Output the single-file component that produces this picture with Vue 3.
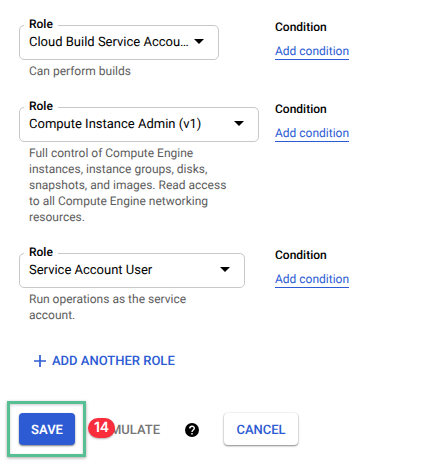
<script setup>
const roles = [
  { name: 'Cloud Build Service Accou…', lines: ['Can perform builds'], size: 'small' },
  {
    name: 'Compute Instance Admin (v1)',
    lines: [
      'Full control of Compute Engine',
      'instances, instance groups, disks,',
      'snapshots, and images. Read access',
      'to all Compute Engine networking',
      'resources.',
    ],
    size: 'large',
  },
  { name: 'Service Account User', lines: ['Run operations as the service', 'account.'], size: 'medium' },
]
</script>

<template>
  <main class="panel">
    <section v-for="role in roles" :key="role.name" class="row">
      <div class="role">
        <div class="select" :class="role.size">
          <span class="label">Role</span>
          <span class="value">{{ role.name }}</span>
          <svg class="arrow" width="10" height="5" viewBox="0 0 10 5"><path d="M0 0h10L5 5z" fill="#000" /></svg>
        </div>
        <p class="help"><span v-for="line in role.lines" :key="line">{{ line }}</span></p>
      </div>
      <div class="condition">
        <span class="heading">Condition</span>
        <a class="link">Add condition</a>
      </div>
    </section>

    <button class="add">
      <svg width="12" height="12" viewBox="0 0 12 12"><path d="M6 0v12M0 6h12" stroke="#2c5bd3" stroke-width="1.7" /></svg>
      <span>ADD ANOTHER ROLE</span>
    </button>

    <footer class="actions">
      <div class="highlight"><button class="btn save">SAVE</button></div>
      <div class="simulate">
        <span>MULATE</span>
        <span class="badge">14</span>
      </div>
      <svg class="question" width="14" height="14" viewBox="0 0 14 14">
        <circle cx="7" cy="7" r="7" fill="#000" />
        <path d="M4.8 5.5C4.8 2.4 9.3 2.5 9.3 5.3C9.3 7 7 7 7 8.9" fill="none" stroke="#fff" stroke-width="1.4" />
        <path d="M6.3 10h1.4v1.4H6.3z" fill="#fff" />
      </svg>
      <button class="btn cancel">CANCEL</button>
    </footer>
  </main>
</template>

<style>
body {
  background: #fff;
}
</style>

<style scoped>
.panel {
  box-sizing: border-box;
  width: 440px;
  height: 473px;
  padding-top: 25px;
  overflow: hidden;
  background: #fff;
  color: #000;
  font-family: Roboto, "Liberation Sans", sans-serif;
  text-rendering: geometricPrecision;
}
.row {
  display: flex;
  margin: 0 0 28px 19px;
}
.role {
  width: 256px;
}
.select {
  box-sizing: border-box;
  position: relative;
  display: flex;
  align-items: center;
  justify-content: space-between;
  height: 35px;
  padding: 0 14px 2px 9px;
  border: 1px solid #c8c8c8;
  border-radius: 5px;
}
.small { width: 200px; }
.medium { width: 226px; }
.large { width: 240px; }
.label {
  position: absolute;
  top: -9px;
  left: 4px;
  padding: 0 5px;
  background: #fff;
  font-size: 12px;
  font-weight: 500;
  line-height: 15px;
}
.value {
  padding-top: 2px;
  font-size: 13px;
  line-height: 18px;
  white-space: nowrap;
}
.help {
  margin: 3px 0 0 10px;
  color: #5c5c5c;
  font-size: 12px;
  line-height: 16px;
}
.help span {
  display: block;
  white-space: nowrap;
}
.condition {
  display: flex;
  flex-direction: column;
  align-items: flex-start;
  margin-top: -6px;
}
.heading {
  font-size: 12px;
  font-weight: 500;
  line-height: 16px;
}
.link {
  margin-top: 8px;
  padding-top: 1px;
  border-bottom: 1px solid #2c5bd3;
  color: #2c5bd3;
  font-size: 12px;
  line-height: 15px;
}
button {
  border: 0;
  background: none;
  font-family: inherit;
  font-weight: 500;
  white-space: nowrap;
  text-rendering: inherit;
}
.add {
  display: flex;
  align-items: center;
  gap: 6px;
  height: 18px;
  margin: 0 0 0 34px;
  padding: 0;
  color: #2c5bd3;
  font-size: 13px;
}
.add svg {
  margin-top: 1px;
}
.add span {
  padding-top: 2px;
}
.actions {
  display: flex;
  align-items: center;
  height: 56px;
  margin: 32px 0 0 7px;
}
.highlight {
  box-sizing: border-box;
  width: 79px;
  height: 56px;
  padding: 9px;
  border: 3px solid #57bf94;
  box-shadow: 0 1px 3px rgba(0, 0, 0, 0.35), inset 0 1px 3px rgba(0, 0, 0, 0.2);
}
.btn {
  height: 32px;
  padding: 2px 0 0;
  border-radius: 4px;
  font-size: 13px;
}
.save {
  width: 56px;
  background: #2c5bd3;
  color: #fff;
  font-weight: 600;
  box-shadow: 0 1px 2px rgba(0, 0, 0, 0.5);
}
.simulate {
  position: relative;
  display: flex;
  justify-content: flex-end;
  width: 74px;
  padding-top: 4px;
  color: #757575;
  font-size: 13px;
  font-weight: 500;
  line-height: 18px;
}
.badge {
  position: absolute;
  top: 0;
  left: 2px;
  width: 27px;
  height: 20px;
  border-radius: 10px;
  background: #fa2d3c;
  box-shadow: 0 1px 2px rgba(0, 0, 0, 0.3);
  color: #fff;
  font-family: Inter, sans-serif;
  font-size: 14px;
  font-weight: 600;
  line-height: 20px;
  text-align: center;
}
.question {
  margin: 1px 0 0 25px;
}
.cancel {
  width: 74px;
  margin-left: 25px;
  background: #fff;
  color: #2c5bd3;
  box-shadow: 0 1px 2px rgba(0, 0, 0, 0.45), 0 0 2px rgba(0, 0, 0, 0.12);
}
</style>
